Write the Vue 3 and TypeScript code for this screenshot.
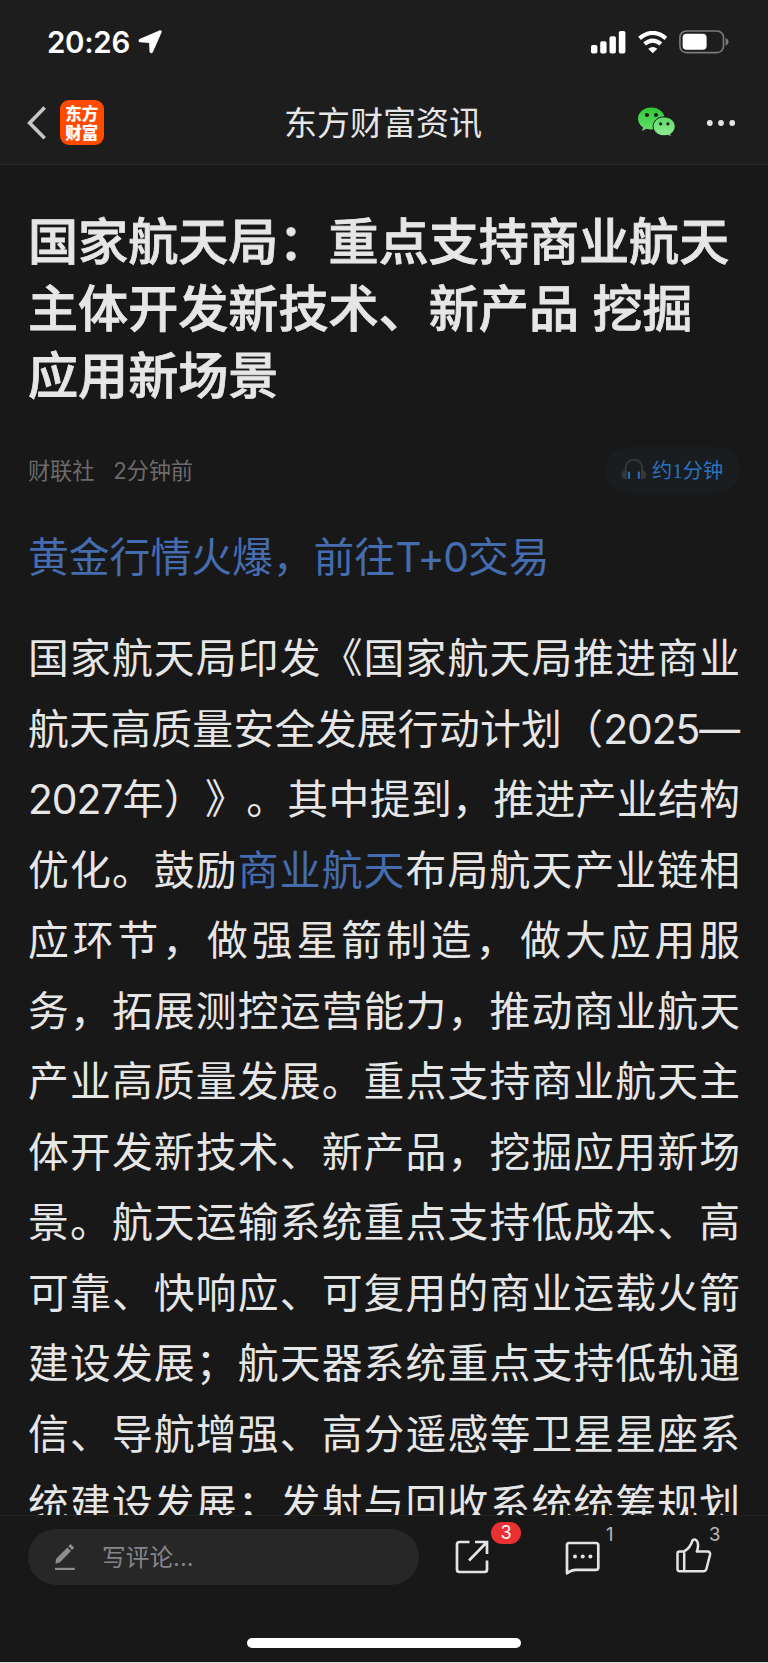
<script setup lang="ts">
interface Segment { text: string; link?: boolean; latin?: boolean }

const titleLines: string[] = [
  '国家航天局：重点支持商业航天',
  '主体开发新技术、新产品 挖掘',
  '应用新场景',
]

const bodyLines: Segment[][] = [
  [{ text: '国家航天局印发《国家航天局推进商业' }],
  [{ text: '航天高质量安全发展行动计划（' }, { text: '2025', latin: true }, { text: '—' }],
  [{ text: '2027', latin: true }, { text: '年）》。其中提到，推进产业结构' }],
  [{ text: '优化。鼓励' }, { text: '商业航天', link: true }, { text: '布局航天产业链相' }],
  [{ text: '应环节，做强星箭制造，做大应用服' }],
  [{ text: '务，拓展测控运营能力，推动商业航天' }],
  [{ text: '产业高质量发展。重点支持商业航天主' }],
  [{ text: '体开发新技术、新产品，挖掘应用新场' }],
  [{ text: '景。航天运输系统重点支持低成本、高' }],
  [{ text: '可靠、快响应、可复用的商业运载火箭' }],
  [{ text: '建设发展；航天器系统重点支持低轨通' }],
  [{ text: '信、导航增强、高分遥感等卫星星座系' }],
  [{ text: '统建设发展；发射与回收系统统筹规划' }],
]
</script>

<template>
  <div class="screen">
    <header class="top">
      <div class="status">
        <span class="time">20:26</span>
        <svg class="locate" width="24" height="24" viewBox="0 0 24 24">
          <path d="M22.2 1 L1.8 9.6 Q.6 11.2 2 11.5 L11.8 12.2 L12.2 21.6 Q13 23.6 14.3 21.8 L23 2 Q23.2 .8 22.2 1Z" fill="#fff" stroke="#fff" stroke-width="1.4" stroke-linejoin="round" />
        </svg>
        <span class="grow"></span>
        <svg class="signal" width="35" height="23" viewBox="0 0 35 23" fill="#fff">
          <rect x="0" y="14" width="6.4" height="8.5" rx="1.8" />
          <rect x="9.2" y="10.2" width="6.4" height="12.3" rx="1.8" />
          <rect x="18.5" y="5.2" width="6.4" height="17.3" rx="1.8" />
          <rect x="27.8" y="0" width="6.6" height="22.5" rx="1.8" />
        </svg>
        <svg class="wifi" width="30" height="23" viewBox="0 0 30 23" fill="none" stroke="#fff" stroke-width="4.2">
          <path d="M1.6 7.3 Q14.5 -3.4 27.9 7.3" />
          <path d="M6.6 12.9 Q14.7 6.2 22.9 12.9" />
          <path d="M14.75 22.3 L10.2 17.7 Q14.75 14.3 19.3 17.7Z" fill="#fff" stroke="none" />
        </svg>
        <svg class="battery" width="50" height="24" viewBox="0 0 50 24">
          <rect x=".9" y="1" width="43.6" height="21.6" rx="6.5" fill="none" stroke="#7c7c7c" stroke-width="1.6" />
          <rect x="3.6" y="3.8" width="24" height="16" rx="4" fill="#fff" />
          <path d="M46.6 7.7 Q49.6 9.2 49.6 11.8 Q49.6 14.4 46.6 15.9Z" fill="#7c7c7c" />
        </svg>
      </div>
      <nav class="nav">
        <svg class="back" width="20" height="34" viewBox="0 0 20 34" fill="none" stroke="#c6c6c6" stroke-width="3.6">
          <path d="M17.7 1.5 L2.6 17 L17.7 32.2" />
        </svg>
        <div class="logo"><span>东方</span><span>财富</span></div>
        <div class="nav-title">东方财富资讯</div>
        <svg class="wechat" width="38" height="30" viewBox="0 0 38 30">
          <defs>
            <linearGradient id="wg1" x1="0" y1="0" x2="0" y2="1"><stop offset="0" stop-color="#2dc735" /><stop offset="1" stop-color="#66df6c" /></linearGradient>
            <linearGradient id="wg2" x1="0" y1="0" x2="0" y2="1"><stop offset="0" stop-color="#5fd866" /><stop offset="1" stop-color="#92ed96" /></linearGradient>
          </defs>
          <path d="M13.3 .4 C5.8 .4 0 5.3 0 11.6 C0 15.3 2 18.5 5.1 20.5 L4 23.9 L8.5 21.8 C10 22.3 11.6 22.5 13.3 22.5 C20.7 22.5 26.6 17.7 26.6 11.5 C26.6 5.3 20.7 .4 13.3 .4Z" fill="url(#wg1)" />
          <circle cx="9" cy="8" r="2.1" fill="#1d1d1d" /><circle cx="18" cy="8" r="2.1" fill="#1d1d1d" />
          <path d="M26 9.9 C19.9 9.9 15.1 14 15.1 19.3 C15.1 24.6 19.9 28.8 26 28.8 C27.4 28.8 28.7 28.6 29.9 28.2 L33.4 29.9 L32.6 27 C35.4 25.2 37.2 22.5 37.2 19.3 C37.2 14 32.2 9.9 26 9.9Z" fill="url(#wg2)" stroke="#1d1d1d" stroke-width="1" />
          <circle cx="22.6" cy="16.8" r="1.6" fill="#1d1d1d" /><circle cx="29.9" cy="16.8" r="1.6" fill="#1d1d1d" />
        </svg>
        <svg class="more" width="30" height="8" viewBox="0 0 30 8" fill="#e4e4e4">
          <circle cx="3.8" cy="4" r="2.9" /><circle cx="15" cy="4" r="2.9" /><circle cx="26.2" cy="4" r="2.9" />
        </svg>
      </nav>
    </header>

    <main class="article">
      <h1 class="title"><span v-for="line in titleLines" :key="line">{{ line }}</span></h1>
      <div class="meta">
        <span>财联社</span><span class="ago">2分钟前</span>
        <div class="listen">
          <svg width="26" height="22" viewBox="0 0 26 22">
            <path d="M4.7 15 V8.5 A8.2 7.8 0 0 1 21.1 8.5 V15" fill="none" stroke="#343638" stroke-width="2" />
            <path d="M5.8 10.8 V20.5 C2.4 20.5 .5 18.4 .5 15.8 C.5 13 2.4 11 5.8 10.8Z M20 10.8 V20.5 C23.4 20.5 25.3 18.4 25.3 15.8 C25.3 13 23.4 11 20 10.8Z" fill="#343638" />
            <rect x="7" y="12.5" width="2" height="7.5" rx=".8" fill="#2b6db8" /><rect x="16.8" y="12.5" width="2" height="7.5" rx=".8" fill="#2b6db8" />
          </svg>
          <span class="duration">约<b>1</b>分钟</span>
        </div>
      </div>
      <div class="promo">黄金行情火爆，前往<span class="latin">T+0</span>交易</div>
      <div class="body">
        <p v-for="(line, i) in bodyLines" :key="i"><span v-for="(seg, j) in line" :key="j" :class="{ link: seg.link, latin: seg.latin }">{{ seg.text }}</span></p>
      </div>
    </main>

    <footer class="bar">
      <div class="actions">
        <div class="comment">
          <svg width="21" height="28" viewBox="0 0 21 28" fill="#8d8d93">
            <path d="M.4 20.7 L1.2 15.8 L12.4 4.5 L16 8.1 L5 19.2Z M13.4 3.2 L15.6 .9 L19.2 4.7 L17.1 7Z" />
            <rect x="0" y="24.8" width="19.8" height="2.2" />
          </svg>
          <span>写评论...</span>
        </div>
        <div class="action share">
          <svg width="34" height="36" viewBox="0 0 34 36" fill="none" stroke="#e4e4e4" stroke-width="2.7">
            <path d="M14.5 2 H4.5 Q2 2 2 4.5 V29.5 Q2 32 4.5 32 H29.5 Q32 32 32 29.5 V20.5 M20 2 H32 V14 M31.5 2.5 L14 20.5" />
          </svg>
          <i class="badge">3</i>
        </div>
        <div class="action chat">
          <svg width="36" height="36" viewBox="0 0 36 36" fill="none" stroke="#e4e4e4" stroke-width="2.7">
            <path d="M4 2 H31 Q33.3 2 33.3 4.3 V26.5 Q33.3 28.8 31 28.8 H11 Q6 28.8 2 32.3 V4 Q2 2 4 2Z" stroke-linejoin="round" />
            <g fill="#e4e4e4" stroke="none"><circle cx="10" cy="15.6" r="2" /><circle cx="17.7" cy="15.6" r="2" /><circle cx="25.4" cy="15.6" r="2" /></g>
          </svg>
          <i class="count">1</i>
        </div>
        <div class="action like">
          <svg width="36" height="36" viewBox="0 0 36 36" fill="none" stroke="#e4e4e4" stroke-width="2.5" stroke-linejoin="round">
            <path d="M8.2 13.4 H3.6 Q1.5 13.4 1.5 15.6 V31 Q1.5 33.2 3.6 33.2 H27.5 Q29.8 33.2 30.4 31 L34 17 Q34.6 13.6 31.5 13.6 H20.8 Q23 8 21.4 3.8 Q19.8 .4 16.5 2.3 Q14.5 9.5 8.2 13.4 V33" />
          </svg>
          <i class="count">3</i>
        </div>
      </div>
      <div class="home"></div>
    </footer>
  </div>
</template>

<style scoped>
.screen { width: 768px; height: 1663px; display: flex; flex-direction: column; overflow: hidden; background: #181818; color: #e6e6e6; font-family: Inter, "Noto Sans CJK SC", sans-serif; text-spacing-trim: space-all; box-sizing: border-box; border-bottom: 1px solid #dcdcdc; }
.top { flex: none; height: 165px; box-sizing: border-box; background: #1d1d1d; border-bottom: 1px solid #272727; }
.status { height: 84px; display: flex; align-items: center; padding: 0 39px 0 47px; }
.time { font-size: 29.5px; font-weight: 600; color: #fff; letter-spacing: -.3px; }
.locate { margin-left: 8px; }
.grow { flex: 1; }
.wifi { margin-left: 12px; }
.battery { margin-left: 11px; }
.nav { height: 77px; display: flex; align-items: center; padding: 0 32px 0 27px; }
.logo { margin-left: 12.5px; width: 44.5px; height: 44.5px; border-radius: 9px; background: #ff4a00; color: #fff; display: flex; flex-direction: column; align-items: center; justify-content: center; font: 900 16.5px/18.5px "Noto Sans CJK SC", sans-serif; }
.nav-title { flex: 1; text-align: center; font-size: 33px; line-height: 40px; padding: 1px 0 0 24px; }
.wechat { margin: 0 30px 1px 0; }
.article { flex: 1; min-height: 0; overflow: hidden; padding: 44px 28px 0; }
.title { margin: 0; font-size: 50.1px; line-height: 66.8px; font-weight: 500; -webkit-text-stroke: .8px #e6e6e6; }
.title span { display: block; white-space: nowrap; }
.meta { margin-top: 38px; height: 46px; display: flex; align-items: center; font-size: 22.2px; color: #6b6b6b; }
.meta > span { padding-bottom: 3px; letter-spacing: -.1px; }
.ago { margin-left: 19px; }
.listen { margin-left: auto; width: 135px; height: 46px; box-sizing: border-box; border-radius: 23px; background: #191d20; display: flex; align-items: center; gap: 5px; padding-left: 16px; color: #2b72bf; font-size: 20.2px; }
.duration { padding-bottom: 2px; }
.listen b { font: 400 21px "Liberation Serif", serif; }
.promo { margin-top: 34px; font-size: 40.8px; line-height: 60px; color: #456cae; }
.body { margin-top: 36px; }
.body p { margin: 0; height: 70.5px; font-size: 40.8px; line-height: 70.5px; white-space: nowrap; text-align: justify; text-align-last: justify; }
.link { color: #456cae; }
.latin { letter-spacing: -1.1px; }
.bar { flex: none; height: 147px; box-sizing: border-box; border-top: 1px solid #222; display: flex; flex-direction: column; align-items: center; }
.actions { width: 100%; box-sizing: border-box; display: flex; padding: 13px 28px 0; }
.comment { width: 391px; height: 56px; border-radius: 28px; background: #272727; display: flex; align-items: center; box-sizing: border-box; padding-left: 27px; color: #85858a; font-size: 23.7px; gap: 26px; }
.comment span { padding-bottom: 2px; }
.action { position: relative; height: 36px; }
.share { margin: 11px 0 0 36px; }
.chat { margin: 12px 0 0 76px; }
.like { margin: 9px 0 0 75px; }
.action svg { display: block; }
i { font-style: normal; position: absolute; }
.badge { left: 36px; top: -18px; width: 30px; height: 22px; border-radius: 11px; background: #ea3131; color: #fff; text-align: center; font-size: 18px; line-height: 22px; }
.count { left: 41px; top: -16px; font-size: 18.5px; line-height: 18px; color: #b8b8b8; }
.like .count { left: 33px; top: -13px; }
.home { margin-top: 53px; width: 274px; height: 9.5px; border-radius: 5px; background: #fff; }
</style>

<style>
body { background: #181818; }
</style>
